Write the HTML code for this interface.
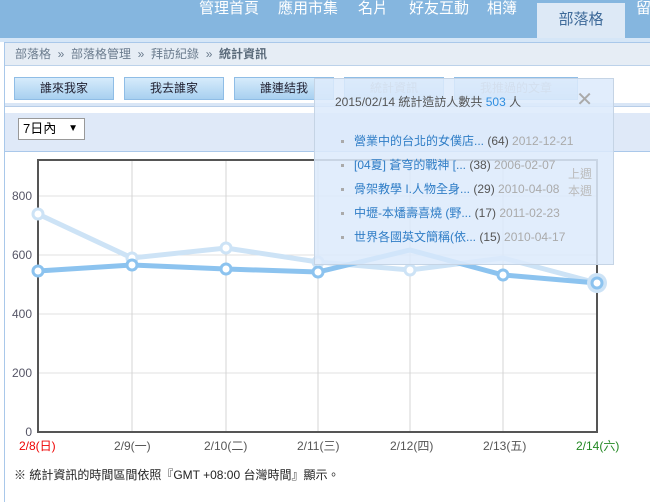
<!DOCTYPE html>
<html><head><meta charset="utf-8"><style>
*{margin:0;padding:0;box-sizing:border-box}
body{width:650px;height:500px;overflow:hidden;background:#fff;font-family:"Liberation Sans","Noto Sans CJK TC",sans-serif;position:relative;font-size:12px}
.top{position:absolute;left:0;top:0;width:650px;height:38px;background:#85b6df}
.nav{position:absolute;top:0;color:#fff;font-size:15px;line-height:18px}
.tab{position:absolute;left:537px;top:3px;width:88px;height:35px;background:#dde9f6;color:#3e6a99;font-size:15px;text-align:center;line-height:26px;padding-top:4px}
.band{position:absolute;left:0;top:38px;width:650px;height:4px;background:#d5e6f7}
.box{position:absolute;left:4px;top:42px;width:650px;height:460px;border-left:1px solid #a9c8ea;border-top:1px solid #a9c8ea}
.bc{position:absolute;left:5px;top:43px;width:645px;height:23px;background:#e6edf5;border-bottom:1px solid #bcd2ea;color:#6a7b8d;font-size:12px;line-height:22px;padding-left:10px}
.bc b{color:#5a6a7a}
.btn{position:absolute;top:77px;width:100px;height:23px;background:linear-gradient(#d6ebfb,#a8d0f0);border:1px solid #8fbde6;text-align:center;line-height:21px;color:#223}
.sel{position:absolute;left:5px;top:103px;width:645px;height:4px;background:#d9e6f6;border-bottom:1px solid #b7cde8}
.sel2{position:absolute;left:5px;top:113px;width:645px;height:39px;background:#dfe9f8;border-bottom:1px solid #aac8ea}
.dd{position:absolute;left:18px;top:118px;width:67px;height:22px;background:#fff;border:1px solid #999;font-size:13px;line-height:20px;padding-left:4px}
.pop{position:absolute;left:314px;top:78px;width:300px;height:187px;background:rgba(220,234,252,.86);border:1px solid #c5d4e5}
.pop .h{position:absolute;left:20px;top:14px;color:#555;font-size:12px}
.pop ul{position:absolute;left:26px;top:53px;list-style:none}
.pop li{height:24px;font-size:12px;color:#555;white-space:nowrap}
.pop li:before{content:"";display:inline-block;width:3px;height:3px;background:#aaa;margin-right:10px;vertical-align:middle}
.pop a{color:#2f7dc6}.pop i{font-style:normal;color:#aaa}
.foot{position:absolute;left:14px;top:466px;font-size:12px;color:#222}
.xl{position:absolute;top:437px;font-size:12px;color:#555}
.yl{position:absolute;left:10px;font-size:12px;color:#556;width:22px;text-align:right}
</style></head><body>
<div class="top"></div>
<div class="nav" style="left:199px">管理首頁</div>
<div class="nav" style="left:278px">應用市集</div>
<div class="nav" style="left:358px">名片</div>
<div class="nav" style="left:409px">好友互動</div>
<div class="nav" style="left:487px">相簿</div>
<div class="tab">部落格</div>
<div class="nav" style="left:636px">留</div>
<div class="band"></div>
<div class="box"></div>
<div class="bc">部落格 &nbsp;»&nbsp; 部落格管理 &nbsp;»&nbsp; 拜訪紀錄 &nbsp;»&nbsp; <b>統計資訊</b></div>
<div class="btn" style="left:14px">誰來我家</div>
<div class="btn" style="left:124px">我去誰家</div>
<div class="btn" style="left:234px">誰連結我</div>
<div class="btn" style="left:344px;color:#999">統計資訊</div>
<div class="btn" style="left:454px;width:124px;color:#999">我推過的文章</div>
<div class="sel"></div>
<div class="sel2"></div>
<div class="dd">7日內 <span style="position:absolute;right:6px;font-size:10px">▼</span></div>
<svg style="position:absolute;left:0;top:0" width="650" height="500">
<g stroke="#e2e2e2" stroke-width="1">
<line x1="38" y1="196" x2="597" y2="196"/><line x1="38" y1="255" x2="597" y2="255"/><line x1="38" y1="314" x2="597" y2="314"/><line x1="38" y1="373" x2="597" y2="373"/>
</g>
<g stroke="#d4d4d4" stroke-width="1">
<line x1="132" y1="160" x2="132" y2="432"/><line x1="226" y1="160" x2="226" y2="432"/><line x1="318" y1="160" x2="318" y2="432"/><line x1="410" y1="160" x2="410" y2="432"/><line x1="503" y1="160" x2="503" y2="432"/>
</g>
<path d="M38 160V432H597V160Z" fill="none" stroke="#555" stroke-width="2"/>
<polyline points="38,214 132,258 226,248 318,262 410,270 503,258 597,283" fill="none" stroke="#cde3f6" stroke-width="5"/>
<g fill="#fff" stroke="#cde3f6" stroke-width="3"><circle cx="38" cy="214" r="5"/><circle cx="132" cy="258" r="5"/><circle cx="226" cy="248" r="5"/><circle cx="318" cy="262" r="5"/><circle cx="410" cy="270" r="5"/></g>
<polyline points="38,271 132,265 226,269 318,272 410,250 503,275 597,283" fill="none" stroke="#8cc3ef" stroke-width="5"/>
<circle cx="597" cy="283" r="10" fill="#cde3f6"/>
<g fill="#fff" stroke="#8cc3ef" stroke-width="3"><circle cx="38" cy="271" r="5"/><circle cx="132" cy="265" r="5"/><circle cx="226" cy="269" r="5"/><circle cx="318" cy="272" r="5"/><circle cx="503" cy="275" r="5"/><circle cx="597" cy="283" r="5"/></g>
</svg>
<div class="yl" style="top:189px">800</div>
<div class="yl" style="top:248px">600</div>
<div class="yl" style="top:307px">400</div>
<div class="yl" style="top:366px">200</div>
<div class="yl" style="top:425px">0</div>
<div class="xl" style="left:19px;color:#e00">2/8(日)</div>
<div class="xl" style="left:114px">2/9(一)</div>
<div class="xl" style="left:204px">2/10(二)</div>
<div class="xl" style="left:297px">2/11(三)</div>
<div class="xl" style="left:390px">2/12(四)</div>
<div class="xl" style="left:483px">2/13(五)</div>
<div class="xl" style="left:576px;color:#228822">2/14(六)</div>
<div class="foot">※ 統計資訊的時間區間依照『GMT +08:00 台灣時間』顯示。</div>
<div class="pop">
<div class="h">2015/02/14 統計造訪人數共 <span style="color:#2f8ee0">503</span> 人</div>
<div style="position:absolute;right:20px;top:8px;font-size:20px;color:#aaa">✕</div>
<div style="position:absolute;left:253px;top:87px;color:#bbb;font-size:12px;line-height:17px">上週<br>本週</div>
<ul>
<li><a>營業中的台北的女僕店...</a> (64) <i>2012-12-21</i></li>
<li><a>[04夏] 蒼穹的戰神 [...</a> (38) <i>2006-02-07</i></li>
<li><a>骨架教學 I.人物全身...</a> (29) <i>2010-04-08</i></li>
<li><a>中壢-本燔壽喜燒 (野...</a> (17) <i>2011-02-23</i></li>
<li><a>世界各國英文簡稱(依...</a> (15) <i>2010-04-17</i></li>
</ul>
</div>
</body></html>
